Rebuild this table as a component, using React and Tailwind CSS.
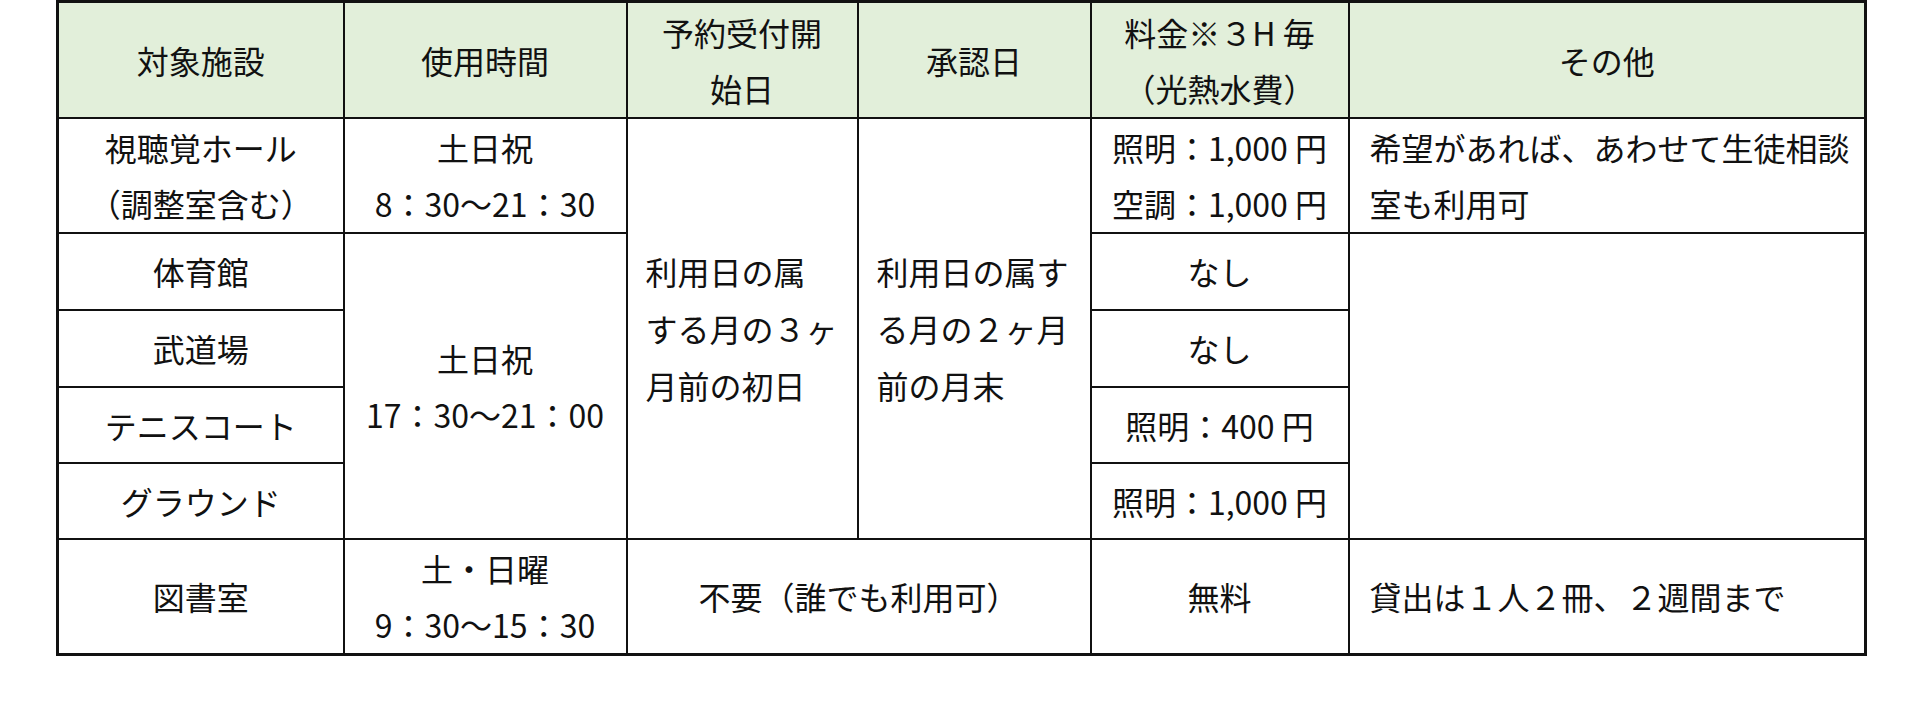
const th = "border-2 border-[#111] bg-[#e2efda] font-normal text-center align-middle";
const td = "border-2 border-[#111] text-center align-middle";

const FacilityTable = () => {
  return (
    <div className="min-h-[712px] bg-white pl-[56px] text-[#111] font-['Noto_Sans_CJK_JP','Noto_Sans',sans-serif] text-[32px] leading-[56px]">
      <table className="table-fixed border-collapse border-[3px] border-[#111] w-[1808px]">
        <colgroup>
          <col className="w-[286px]" />
          <col className="w-[283px]" />
          <col className="w-[231px]" />
          <col className="w-[233px]" />
          <col className="w-[258px]" />
          <col className="w-[517px]" />
        </colgroup>
        <thead>
          <tr className="h-[116px]">
            <th className={th}>対象施設</th>
            <th className={th}>使用時間</th>
            <th className={th}>
              予約受付開
              <br />
              始日
            </th>
            <th className={th}>承認日</th>
            <th className={th}>
              料金※３H 毎
              <br />
              （光熱水費）
            </th>
            <th className={th}>その他</th>
          </tr>
        </thead>
        <tbody>
          <tr className="h-[115px]">
            <td className={td}>
              視聴覚ホール
              <br />
              （調整室含む）
            </td>
            <td className={td}>
              土日祝
              <br />
              8：30～21：30
            </td>
            <td rowSpan={5} className="border-2 border-[#111] align-middle text-left pl-[18px] leading-[57px] whitespace-nowrap">
              利用日の属
              <br />
              する月の３ヶ
              <br />
              月前の初日
            </td>
            <td rowSpan={5} className="border-2 border-[#111] align-middle text-left pl-[18px] leading-[57px] whitespace-nowrap">
              利用日の属す
              <br />
              る月の２ヶ月
              <br />
              前の月末
            </td>
            <td className={td + " whitespace-nowrap"}>
              照明：1,000 円
              <br />
              空調：1,000 円
            </td>
            <td className="border-2 border-[#111] align-middle text-left pl-[20px] whitespace-nowrap">
              希望があれば、あわせて生徒相談
              <br />
              室も利用可
            </td>
          </tr>
          <tr className="h-[77px]">
            <td className={td}>体育館</td>
            <td rowSpan={4} className={td}>
              土日祝
              <br />
              17：30～21：00
            </td>
            <td className={td}>なし</td>
            <td rowSpan={4} className="border-2 border-[#111]"></td>
          </tr>
          <tr className="h-[77px]">
            <td className={td}>武道場</td>
            <td className={td}>なし</td>
          </tr>
          <tr className="h-[76px]">
            <td className={td}>テニスコート</td>
            <td className={td}>照明：400 円</td>
          </tr>
          <tr className="h-[76px]">
            <td className={td}>グラウンド</td>
            <td className={td + " whitespace-nowrap"}>照明：1,000 円</td>
          </tr>
          <tr className="h-[116px]">
            <td className={td}>図書室</td>
            <td className={td}>
              土・日曜
              <br />
              9：30～15：30
            </td>
            <td colSpan={2} className={td}>
              不要（誰でも利用可）
            </td>
            <td className={td}>無料</td>
            <td className="border-2 border-[#111] align-middle text-left pl-[20px] whitespace-nowrap">
              貸出は１人２冊、２週間まで
            </td>
          </tr>
        </tbody>
      </table>
    </div>
  );
};

export default function App() {
  return <FacilityTable />;
}
